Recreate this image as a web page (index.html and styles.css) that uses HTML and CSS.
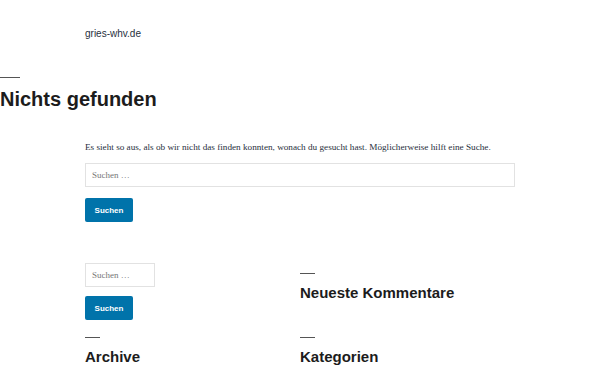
FILE: index.html
```html
<!DOCTYPE html>
<html lang="de">
<head>
    <meta charset="UTF-8">
    <meta name="viewport" content="width=device-width, initial-scale=1.0">
    <title>Nichts gefunden – gries-whv.de</title>
    <link rel="stylesheet" href="styles.css">
</head>
<body>
    <header class="site-header">
        <p class="site-title">gries-whv.de</p>
    </header>

    <main class="site-main">
        <header class="page-header">
            <hr class="sep">
            <h1 class="page-title">Nichts gefunden</h1>
        </header>

        <div class="page-content">
            <p>Es sieht so aus, als ob wir nicht das finden konnten, wonach du gesucht hast. Möglicherweise hilft eine Suche.</p>
            <form class="search-form">
                <input type="search" class="search-field" placeholder="Suchen …">
                <button type="button" class="search-submit">Suchen</button>
            </form>
        </div>
    </main>

    <aside class="widget-area">
        <div class="widget-col">
            <form class="search-form widget-search">
                <input type="search" class="search-field small" placeholder="Suchen …">
                <button type="button" class="search-submit">Suchen</button>
            </form>
            <section class="widget">
                <hr class="sep short">
                <h2 class="widget-title">Archive</h2>
            </section>
        </div>
        <div class="widget-col right">
            <section class="widget">
                <hr class="sep short">
                <h2 class="widget-title">Neueste Kommentare</h2>
            </section>
            <section class="widget">
                <hr class="sep short">
                <h2 class="widget-title">Kategorien</h2>
            </section>
        </div>
    </aside>
</body>
</html>
```

FILE: styles.css
```css
body {
    margin: 0;
    background: #fff;
    color: #28303d;
    font-family: "Liberation Serif", serif;
}
.site-header {
    padding: 28px 85px 0;
}
.site-title {
    margin: 0;
    font-family: "Liberation Sans", Arial, sans-serif;
    font-size: 10px;
    line-height: 12px;
}
.sep {
    margin: 0;
    border: 0;
    height: 1px;
    width: 20px;
    background: #555;
}
.sep.short {
    width: 15px;
}
.page-header {
    margin-top: 37px;
}
.page-title {
    margin: 9px 0 0;
    font-family: "Liberation Sans", Arial, sans-serif;
    font-size: 20px;
    line-height: 24px;
    font-weight: bold;
    color: #1c1c1c;
}
.page-content {
    padding: 0 85px;
}
.page-content p {
    margin: 30px 0 0;
    font-size: 9.2px;
    line-height: 13px;
}
.search-form {
    display: flex;
    flex-direction: column;
    align-items: flex-start;
}
.search-field {
    box-sizing: border-box;
    width: 430px;
    height: 24px;
    margin-top: 9px;
    padding: 0 6px;
    border: 1px solid #e2e2e2;
    font-family: "Liberation Serif", serif;
    font-size: 9px;
    color: #28303d;
    outline: none;
}
.search-field::placeholder {
    color: #767676;
}
.search-field.small {
    width: 70px;
    margin-top: 0;
}
.search-submit {
    box-sizing: border-box;
    width: 48px;
    height: 24px;
    margin-top: 11px;
    padding: 0;
    border: 0;
    border-radius: 2px;
    background: #0073aa;
    color: #fff;
    font-family: "Liberation Sans", Arial, sans-serif;
    font-size: 8px;
    font-weight: bold;
    cursor: pointer;
}
.widget-search .search-submit {
    margin-top: 9px;
}
.widget-area {
    display: grid;
    grid-template-columns: 215px 215px;
    padding: 41px 85px 0;
    align-items: start;
}
.widget-col.right {
    padding-top: 10px;
}
.widget-col .widget-search + .widget {
    margin-top: 17px;
}
.widget-col.right .widget + .widget {
    margin-top: 35px;
}
.widget-title {
    margin: 9px 0 0;
    font-family: "Liberation Sans", Arial, sans-serif;
    font-size: 15px;
    line-height: 19px;
    font-weight: bold;
    color: #1c1c1c;
}
```
